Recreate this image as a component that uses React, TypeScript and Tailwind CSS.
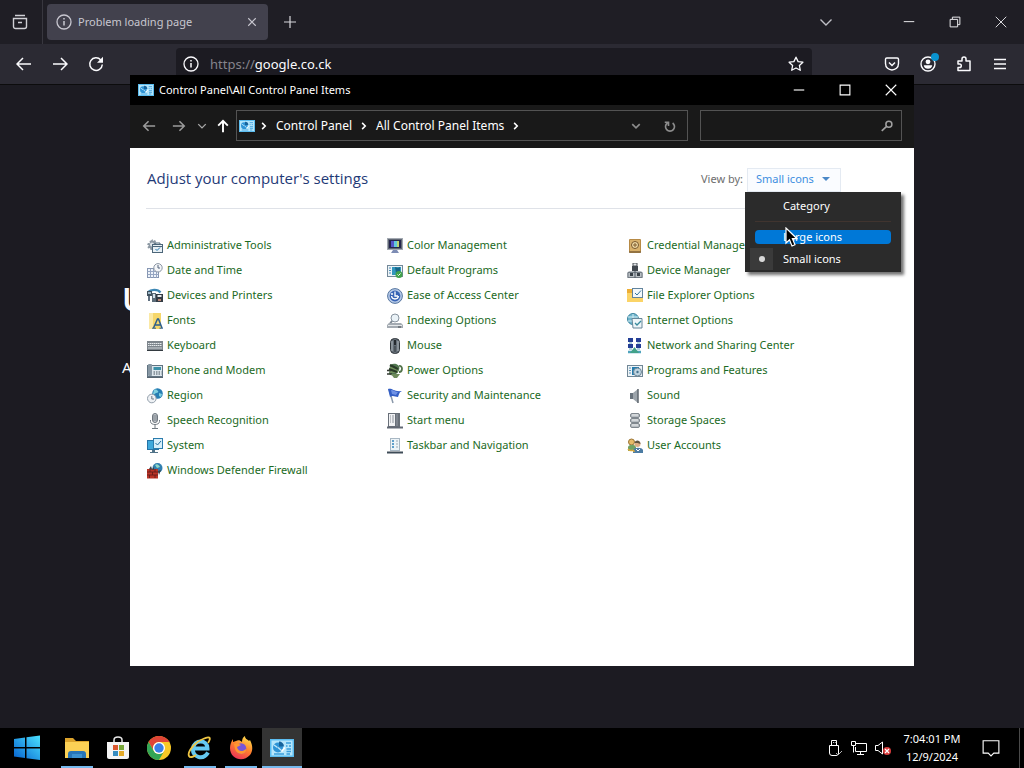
import { useState, type ReactNode } from 'react';

function Icon({ size = 16, children }: { size?: number; children: ReactNode }) {
  return (
    <svg width={size} height={size} viewBox="0 0 16 16" fill="none" className="shrink-0" aria-hidden="true">
      {children}
    </svg>
  );
}

function PanelIcon({ size = 16 }: { size?: number }) {
  return (
    <svg width={size} height={(size * 3) / 4} viewBox="0 0 24 18" fill="none" className="shrink-0" aria-hidden="true">
      <rect width="24" height="18" fill="#5cbdf0" />
      <rect x="1.5" y="1.5" width="21" height="15" fill="#b6e6fb" />
      <circle cx="8" cy="8.500" r="5" fill="#2f94d6" />
      <path d="M9 7.500v-5a5 5 0 0 1 5 5z" fill="#17639c" />
      <path d="M7.500 8.500 4 6M8 8.500l3.500 3" stroke="#c3e9fa" strokeWidth="1.300" />
      <path d="M16 4h5M16 7h1.500M19 7h2M16.500 10H21M4 15h10M16.500 15H20M16.500 12.500H21" stroke="#3a9edd" strokeWidth="1.300" />
      <path d="m11.500 12.500 3.500-4" stroke="#fff" strokeWidth="1.500" />
    </svg>
  );
}

const icons: Record<string, ReactNode> = {
  tools: (
    <>
      <path d="M5.500 1 6 3l2-1 1 1.500-1 1.500 2 1v1.500L8 8l1 2-2 1-1.500-1L5 12H3.500L3 10 1 10.500.5 9 2 7.500 0 6.500 1 5l2 .2L2.500 3 4 2.500z" fill="#8c98a3" />
      <circle cx="5" cy="6.500" r="2" fill="#dfe5ea" />
      <rect x="5.500" y="6.500" width="10" height="8" fill="#e8f0f5" stroke="#4c6679" />
      <path d="M5 8.500h11M8 6V5h5v1" stroke="#4c6679" />
      <path d="m8.500 11 1.500 1.500 3-3" stroke="#2376ad" />
    </>
  ),
  date: (
    <>
      <rect x=".5" y="5.500" width="11" height="9" fill="#eef3fa" stroke="#8696b2" />
      <path d="M.5 8.500h11M.5 11.500h11M3.500 6v9M6.500 6v9M9.500 6v9" stroke="#96a6c2" />
      <circle cx="11" cy="4.800" r="4.200" fill="#f3f5f8" stroke="#8b95a3" />
      <path d="M11 2v3h2" stroke="#53637a" />
    </>
  ),
  devices: (
    <>
      <path d="M1 4C4 1 11 1 13.500 4.500" stroke="#3d87b4" strokeWidth="2.200" />
      <rect x="0" y="3" width="5" height="5" fill="#40515e" />
      <rect x="1" y="4" width="3" height="2" fill="#9db7c6" />
      <rect x="1" y="8" width="2" height="5" fill="#607080" />
      <rect x="5" y="5" width="4" height="9" fill="#5b6b78" />
      <rect x="6" y="6" width="2" height="4" fill="#d5e2ea" />
      <rect x="9" y="6" width="7" height="8" fill="#333b44" />
      <rect x="10.500" y="7" width="4" height="2" fill="#e6e9ec" />
      <rect x="11" y="11" width="3" height="2" fill="#b98674" />
    </>
  ),
  fonts: (
    <>
      <rect x="2" y="0" width="12" height="16" fill="#f6d76b" />
      <path d="M2 0h4v16H2z" fill="#fbe9a5" />
      <path d="m6.500 15 4-9h1l3.500 9M8.500 12h5" stroke="#2d5f8e" strokeWidth="1.500" />
      <path d="M5 15.200h4M12.500 15.200H16" stroke="#2d5f8e" />
    </>
  ),
  keyboard: (
    <>
      <rect x="0" y="3" width="16" height="10" fill="#7d858c" />
      <path d="M1 5.500h14M1 7.500h14" stroke="#e6eaed" strokeDasharray="1.500 .5" />
      <path d="M1 10h14" stroke="#cdd2d6" />
      <path d="M0 12.500h16" stroke="#333a40" />
    </>
  ),
  phone: (
    <>
      <rect x=".5" y="2.500" width="15" height="11" fill="#dce6ec" stroke="#607381" />
      <rect x="1" y="1" width="4" height="12" rx="1" fill="#8797a3" />
      <rect x="6.500" y="4" width="7.500" height="3" fill="#3a90a8" />
      <path d="M6.500 9h8M6.500 11h8" stroke="#44525d" strokeDasharray="1.500 1" />
      <path d="M0 14.500h16" stroke="#576570" />
    </>
  ),
  region: (
    <>
      <circle cx="10.500" cy="5.500" r="5.300" fill="#277eb3" />
      <path d="M7 2c2-1 3 0 4 1s-1 2-2 2-1 2-3 1zM12 5l3 1-1 3-2-1z" fill="#7fd0df" />
      <circle cx="4.800" cy="10.500" r="4.300" fill="#eef1f4" stroke="#929eaa" />
      <path d="M4.800 8v3H7" stroke="#6f7b88" />
    </>
  ),
  mic: (
    <>
      <rect x="5.500" y=".5" width="5" height="9" rx="2.500" fill="#c4c9ce" stroke="#6f777f" />
      <path d="M6 3h4M6 5h4M6 7h4" stroke="#747c84" />
      <path d="M3.500 7v1.500c0 4 9 4 9 0V7M8 12v3M5 15.500h6" stroke="#727a82" />
    </>
  ),
  system: (
    <>
      <rect x="0" y="2" width="12" height="10" fill="#2673a5" />
      <rect x="1" y="3" width="10" height="8" fill="#3fa9dc" />
      <rect x="6.500" y=".5" width="9" height="10" fill="#d7eefa" stroke="#2b7cad" />
      <path d="m8.500 5 2 2 3.500-4" stroke="#1e6d9f" />
      <path d="M5 12h3v2h3v1H3v-1h2z" fill="#527489" />
    </>
  ),
  firewall: (
    <>
      <circle cx="10.500" cy="5" r="5" fill="#317fb0" />
      <path d="M8 2c2-2 4 0 5 2l-3 1z" fill="#8fd8c7" />
      <rect x="0" y="6" width="11" height="9.500" fill="#ba3427" />
      <path d="M0 9h11M0 12h11M3 6v3M8 6v3M5.500 9v3M2.500 12v3M8 12v3" stroke="#5e1b19" strokeWidth=".8" />
      <path d="m2 6 2-3 1 3 2-2v3zM11 8l3-1-2 5z" fill="#3c4146" />
    </>
  ),
  color: (
    <>
      <rect x=".5" y=".5" width="15" height="11" fill="#606773" stroke="#a3a9b2" />
      <rect x="2" y="2" width="12" height="8" fill="#24264d" />
      <path d="M4 3h3v6H4z" fill="#5554c9" />
      <path d="M7 3h3v6H7z" fill="#62c8dd" />
      <path d="M10 3h2v6h-2z" fill="#bbd574" />
      <path d="M6 12h4l2 3H4z" fill="#7d8cb4" />
    </>
  ),
  defaults: (
    <>
      <rect x=".5" y="2.500" width="15" height="11" fill="#edf3f7" stroke="#738999" />
      <path d="M2 5h2M2 7.500h2M2 10h2" stroke="#4c8eb7" />
      <rect x="5" y="4" width="9" height="8" fill="#3296bd" />
      <path d="m8 4 3 1 2-1v4l-4 2z" fill="#176688" />
      <circle cx="12" cy="11.500" r="3.500" fill="#41a24b" />
      <path d="m10.500 11.500 1 1 2-2" stroke="#fff" />
    </>
  ),
  ease: (
    <>
      <circle cx="8" cy="8" r="7.400" fill="#b7cae8" stroke="#55759f" />
      <circle cx="8" cy="8" r="5.400" fill="#3864b5" />
      <path d="M4.500 8C5 12 11 12 11.500 8M8 3.500V8h3" stroke="#fff" strokeWidth="1.300" />
      <circle cx="5" cy="6" r="1" fill="#fff" />
    </>
  ),
  indexing: (
    <>
      <circle cx="8" cy="5" r="4" fill="#eaf2f7" stroke="#8994a0" />
      <path d="m5 8-3 4" stroke="#7e8994" strokeWidth="2" />
      <path d="M2 10h12l2 2v3H0v-3z" fill="#a4abb2" />
      <path d="M1 12.500h14" stroke="#e6e9eb" />
      <path d="M11 14h3" stroke="#454b51" />
    </>
  ),
  mouse: (
    <>
      <rect x="3.500" y=".5" width="9" height="15" rx="4" fill="#636c75" stroke="#31373c" />
      <path d="M5 3v10M11 3v10" stroke="#b2bac1" />
      <rect x="7" y="2" width="2" height="5" fill="#262b30" />
      <path d="M8 8v6" stroke="#343a40" />
    </>
  ),
  power: (
    <>
      <path d="M3 2c5-3 11 0 9 5-1 4-7 7-10 4" fill="#517750" />
      <path d="M3 4h8v6H3z" fill="#708f5c" />
      <path d="m3 2 8 4M2 6l8 3" stroke="#293b28" strokeWidth="2" />
      <path d="M12 3c4-1 4 6 0 6" stroke="#53744b" strokeWidth="1.800" />
      <path d="M0 7.500h4M0 11h5" stroke="#353b33" strokeWidth="1.500" />
      <path d="M4 11h9l-3 4H7z" fill="#6f8c5c" />
    </>
  ),
  flag: (
    <>
      <path d="m2 1 4 14" stroke="#8a98aa" strokeWidth="1.500" />
      <path d="M1 1c5-1 5 3 14 2-3 1-3 4-4 6-3 0-5-2-8 0z" fill="#345fc5" />
      <path d="M4 2c3 0 4 2 7 2l-2 3-4-1z" fill="#6e91e5" />
    </>
  ),
  start: (
    <>
      <rect x="1" y="0" width="12" height="14" fill="#686f78" />
      <rect x="2" y="1" width="6" height="12" fill="#f1f2f4" />
      <path d="M3 3h1M3 5h1M3 7h1M3 9h1M5 3h2M5 5h2M5 7h2M5 9h2" stroke="#8c929b" />
      <path d="M10 1v12" stroke="#9299a2" />
      <path d="M0 14.500h16" stroke="#626974" strokeWidth="2" />
    </>
  ),
  taskbar: (
    <>
      <rect x="3.500" y=".5" width="9" height="12" fill="#edf4f8" stroke="#a8b7c3" />
      <path d="M5 3h2M5 6h2M5 9h2" stroke="#3283ba" strokeWidth="1.500" />
      <path d="M9 3h2M9 6h2M9 9h2" stroke="#9ba9b5" />
      <path d="M0 14.500h16" stroke="#3e4b57" strokeWidth="2" />
    </>
  ),
  credential: (
    <>
      <rect x="2" y="1" width="12" height="14" rx="1" fill="#b78a45" />
      <rect x="3" y="2" width="10" height="11" fill="#d9b16b" />
      <circle cx="8" cy="7" r="3.500" fill="#f2dda9" stroke="#78572c" />
      <path d="M8 5v4M6 7h4" stroke="#805d2c" />
      <path d="M2 14h12" stroke="#705d40" />
    </>
  ),
  device: (
    <>
      <rect x="6" y="0" width="4" height="3" fill="#e1e4e7" stroke="#4c5359" />
      <rect x="5" y="3" width="6" height="6" fill="#40474e" />
      <path d="M2 8h12l2 2v5H0v-5z" fill="#b8bec3" />
      <path d="M1 9.500h14v5H1z" stroke="#747d85" />
      <rect x="3" y="10" width="3" height="3" fill="#394148" />
      <rect x="10" y="10" width="3" height="3" fill="#394148" />
      <path d="M8 8v7" stroke="#535d66" />
    </>
  ),
  folder: (
    <>
      <path d="M0 1h6l2 2h8v11H0z" fill="#edae35" />
      <path d="M0 5h16v9H0z" fill="#fbd467" />
      <rect x="5.500" y=".5" width="10" height="9" fill="#f3f8fb" stroke="#62849d" />
      <path d="m8 5 2 2 4-4.500" stroke="#31769d" />
    </>
  ),
  internet: (
    <>
      <circle cx="6" cy="6" r="5.500" fill="#71b5cd" stroke="#3b849f" />
      <path d="M1 4h10M1 8h9M6 1v10" stroke="#d4eef4" />
      <path d="M5 5.500h10v9.500H6z" fill="#eef6f9" stroke="#688799" />
      <path d="m8 10 2 2 4-4" stroke="#398b9d" strokeWidth="1.300" />
    </>
  ),
  network: (
    <>
      <rect x="1" y="0" width="5" height="4" fill="#243f96" />
      <rect x="9" y="0" width="5" height="4" fill="#243f96" />
      <rect x="1" y="6" width="5" height="4" fill="#243f96" />
      <rect x="9" y="6" width="5" height="4" fill="#243f96" />
      <path d="M2 5h3M10 5h3M2 11h3M10 11h3" stroke="#64a7bc" />
      <path d="M1 14h13" stroke="#4fa3bd" strokeWidth="2.500" />
      <path d="m3 15 4.500-6 4.500 6z" fill="#42a289" />
    </>
  ),
  programs: (
    <>
      <rect x=".5" y="2.500" width="15" height="11" fill="#edf3f7" stroke="#718796" />
      <path d="M2 5h2M2 7.500h2M2 10h2" stroke="#5d92b4" />
      <rect x="5" y="4" width="7" height="8" fill="#247cae" />
      <circle cx="10.500" cy="9" r="4" fill="#bfd4e0" stroke="#6f8797" />
      <circle cx="10.500" cy="9" r="1.200" fill="#47728e" />
    </>
  ),
  sound: (
    <>
      <path d="M3 5h3v6H3z" fill="#68727c" />
      <path d="m6 5 5-4v14l-5-4z" fill="#9ca4ab" />
      <path d="M11 1v14" stroke="#5e666e" strokeWidth="1.500" />
    </>
  ),
  storage: (
    <>
      {[0, 5, 10].map((y) => (
        <g key={y}>
          <rect x="3.500" y={y + 0.5} width="9" height="4" rx="1.500" fill="#b7bdc2" stroke="#7f878e" />
          <path d={`M5 ${y + 2}h6`} stroke="#eef0f1" />
        </g>
      ))}
    </>
  ),
  users: (
    <>
      <circle cx="4.500" cy="4" r="3" fill="#e7bb68" stroke="#9a7435" />
      <path d="M1 13V9c1-3 7-3 8 0v4z" fill="#72a264" />
      <circle cx="10.500" cy="6" r="3" fill="#dcae85" />
      <path d="M7.500 5c1-4 6-3 6 1l-3-1z" fill="#5f5340" />
      <path d="M6 15v-3c1-3 9-3 10 0v3z" fill="#4c7ca3" />
      <path d="m9 11 2 2 2-2" stroke="#fff" />
      <path d="M1 11c3 4 6-1 6 3" stroke="#d9aa3b" strokeWidth="1.500" />
    </>
  ),
};

const columns = [
  [
    { icon: 'tools', label: 'Administrative Tools' },
    { icon: 'date', label: 'Date and Time' },
    { icon: 'devices', label: 'Devices and Printers' },
    { icon: 'fonts', label: 'Fonts' },
    { icon: 'keyboard', label: 'Keyboard' },
    { icon: 'phone', label: 'Phone and Modem' },
    { icon: 'region', label: 'Region' },
    { icon: 'mic', label: 'Speech Recognition' },
    { icon: 'system', label: 'System' },
    { icon: 'firewall', label: 'Windows Defender Firewall' },
  ],
  [
    { icon: 'color', label: 'Color Management' },
    { icon: 'defaults', label: 'Default Programs' },
    { icon: 'ease', label: 'Ease of Access Center' },
    { icon: 'indexing', label: 'Indexing Options' },
    { icon: 'mouse', label: 'Mouse' },
    { icon: 'power', label: 'Power Options' },
    { icon: 'flag', label: 'Security and Maintenance' },
    { icon: 'start', label: 'Start menu' },
    { icon: 'taskbar', label: 'Taskbar and Navigation' },
  ],
  [
    { icon: 'credential', label: 'Credential Manager' },
    { icon: 'device', label: 'Device Manager' },
    { icon: 'folder', label: 'File Explorer Options' },
    { icon: 'internet', label: 'Internet Options' },
    { icon: 'network', label: 'Network and Sharing Center' },
    { icon: 'programs', label: 'Programs and Features' },
    { icon: 'sound', label: 'Sound' },
    { icon: 'storage', label: 'Storage Spaces' },
    { icon: 'users', label: 'User Accounts' },
  ],
];

function InfoIcon() {
  return (
    <Icon>
      <circle cx="8" cy="8" r="7" stroke="currentColor" strokeWidth="1.300" />
      <path d="M8 7v4.500M8 4v1.600" stroke="currentColor" strokeWidth="1.500" />
    </Icon>
  );
}

function Browser() {
  return (
    <div className="flex min-h-0 flex-1 flex-col bg-[#1c1b22] text-[#fbfbfe]">
      {/* Tab strip */}
      <div className="flex h-11 shrink-0 items-center bg-[#1f1e25]">
        <button aria-label="Firefox View" className="flex h-11 w-[43px] items-center justify-center border-r border-[#38373f] pr-[2px] text-[#d0d0d6]">
          <Icon>
            <path d="M3 1.500h10M1.500 4.500h13v8a2 2 0 0 1-2 2h-9a2 2 0 0 1-2-2zM6 8.500h4" stroke="currentColor" strokeWidth="1.400" />
          </Icon>
        </button>
        <div className="ml-1 flex h-9 w-[221px] items-center gap-[6px] rounded bg-[#42414d] pr-2 pl-[9px] text-[#c8c7d0]">
          <InfoIcon />
          <span className="flex-1 text-[11px]">Problem loading page</span>
          <button aria-label="Close tab" className="flex w-4 justify-center">
            <Icon size={12}>
              <path d="m3 3 10 10M13 3 3 13" stroke="currentColor" strokeWidth="1.500" />
            </Icon>
          </button>
        </div>
        <button aria-label="New tab" className="flex h-9 w-11 items-center justify-center">
          <Icon>
            <path d="M8 2v12M2 8h12" stroke="#d8d8dd" strokeWidth="1.200" />
          </Icon>
        </button>
        <button aria-label="List all tabs" className="mr-[42px] ml-auto flex h-9 w-9 items-center justify-center">
          <Icon>
            <path d="m2.500 5.500 5.500 5.500 5.500-5.500" stroke="#c0c0c6" strokeWidth="1.400" />
          </Icon>
        </button>
        <button aria-label="Minimize browser" className="flex h-11 w-[46px] items-center justify-center">
          <Icon size={12}>
            <path d="M1 7.500h14" stroke="#ececf0" strokeWidth="1.300" />
          </Icon>
        </button>
        <button aria-label="Restore browser" className="flex h-11 w-[46px] items-center justify-center">
          <Icon size={12}>
            <path d="M1.500 4.500h10v10h-10zM4.500 4V1.500h10v10H12" stroke="#ececf0" strokeWidth="1.300" />
          </Icon>
        </button>
        <button aria-label="Close browser" className="flex h-11 w-[46px] items-center justify-center">
          <Icon size={12}>
            <path d="m1 1 14 14M15 1 1 15" stroke="#ececf0" strokeWidth="1.200" />
          </Icon>
        </button>
      </div>

      {/* Navigation bar */}
      <div className="flex h-[41px] shrink-0 items-center border-b border-[#0c0c0d] bg-[#2b2a33] px-[6px]">
        <button aria-label="Back" className="flex h-9 w-9 items-center justify-center">
          <Icon>
            <path d="M15 8H1.500M7 2 1 8l6 6" stroke="currentColor" strokeWidth="1.500" />
          </Icon>
        </button>
        <button aria-label="Forward" className="flex h-9 w-9 items-center justify-center">
          <Icon>
            <path d="M1 8h13.500M9 2l6 6-6 6" stroke="currentColor" strokeWidth="1.500" />
          </Icon>
        </button>
        <button aria-label="Reload" className="flex h-9 w-9 items-center justify-center">
          <Icon>
            <path d="M12.800 4A6.300 6.300 0 1 0 14.300 8.500" stroke="currentColor" strokeWidth="1.500" />
            <path d="M15 .8v6H9z" fill="currentColor" />
          </Icon>
        </button>
        <div className="mx-[62px] flex h-8 flex-1 items-center rounded bg-[#1c1b22] pr-2 pl-[7px]">
          <InfoIcon />
          <a href="#" className="ml-[11px] flex-1 pt-[2px] text-[13px] text-[#fbfbfe]">
            <span className="text-[#85848c]">https://</span>google.co.ck
          </a>
          <button aria-label="Bookmark this page">
            <Icon>
              <path d="m8 1.200 2.100 4.400 4.800.6-3.500 3.300.9 4.800L8 12l-4.300 2.300.9-4.800L1.100 6.200l4.800-.6z" stroke="currentColor" strokeWidth="1.300" strokeLinejoin="round" />
            </Icon>
          </button>
        </div>
        <button aria-label="Save to Pocket" className="flex h-9 w-9 items-center justify-center">
          <Icon>
            <path d="M2.800 2h10.400c.8 0 1.300.5 1.300 1.300v4.200c0 8.600-13 8.600-13 0V3.300C1.500 2.500 2 2 2.800 2z" stroke="currentColor" strokeWidth="1.400" />
            <path d="m5 6.500 3 3 3-3" stroke="currentColor" strokeWidth="1.500" />
          </Icon>
        </button>
        <button aria-label="Account" className="relative flex h-9 w-9 items-center justify-center">
          <Icon>
            <circle cx="8" cy="8" r="7" stroke="currentColor" strokeWidth="1.400" />
            <circle cx="8" cy="5.800" r="2.400" fill="currentColor" />
            <path d="M3.800 9.200h8.400c0 4.800-8.400 4.800-8.400 0z" fill="currentColor" />
          </Icon>
          <span className="absolute top-[7px] right-[7px] h-2 w-2 rounded-full bg-[#0a93cf]" />
        </button>
        <button aria-label="Extensions" className="flex h-9 w-9 items-center justify-center">
          <Icon>
            <path d="M2 5h4V3a2 2 0 0 1 4 0v2h4v9.500H2v-3h1.500a1.800 1.800 0 0 0 0-3.600H2z" stroke="currentColor" strokeWidth="1.500" strokeLinejoin="round" />
          </Icon>
        </button>
        <button aria-label="Open menu" className="flex h-9 w-9 items-center justify-center">
          <Icon>
            <path d="M2 3.500h12M2 8h12M2 12.500h12" stroke="currentColor" strokeWidth="1.400" />
          </Icon>
        </button>
      </div>

      <main className="px-[122px] pt-[194px]">
        <h1 className="text-[32px] leading-10 font-semibold">U</h1>
        <p className="mt-9 text-[15px] leading-6">A</p>
      </main>
    </div>
  );
}

function ChevronRight() {
  return (
    <Icon size={10}>
      <path d="m5 3 5 5-5 5" stroke="#fff" strokeWidth="2.500" />
    </Icon>
  );
}

const viewOptions = ['Category', 'Large icons', 'Small icons'];

function ControlPanel() {
  const [view, setView] = useState('Small icons');
  const [highlighted, setHighlighted] = useState('Large icons');
  const [search, setSearch] = useState('');

  return (
    <section className="absolute top-[75px] left-[130px] flex h-[591px] w-[784px] flex-col bg-white text-[11px]">
      {/* Title bar */}
      <header className="flex h-[30px] shrink-0 items-center bg-black pl-2 text-white">
        <PanelIcon />
        <h2 className="ml-[5px] flex-1">Control Panel\All Control Panel Items</h2>
        <button aria-label="Minimize" className="flex h-full w-[46px] items-center justify-center">
          <Icon size={12}>
            <path d="M1 8h14" stroke="#fff" strokeWidth="1.500" />
          </Icon>
        </button>
        <button aria-label="Maximize" className="flex h-full w-[46px] items-center justify-center">
          <Icon size={12}>
            <path d="M1.500 1.500h13v13h-13z" stroke="#fff" strokeWidth="1.500" />
          </Icon>
        </button>
        <button aria-label="Close" className="flex h-full w-[46px] items-center justify-center">
          <Icon size={12}>
            <path d="m1 1 14 14M15 1 1 15" stroke="#fff" strokeWidth="1.500" />
          </Icon>
        </button>
      </header>

      {/* Address bar */}
      <nav className="flex h-[43px] shrink-0 items-center bg-[#191919] pr-3 pb-[2px] pl-1 text-white">
        <button aria-label="Back" className="flex w-[30px] justify-center">
          <Icon size={14}>
            <path d="M15 8H2M7.500 2.500 2 8l5.500 5.500" stroke="#9a9a9a" strokeWidth="1.800" />
          </Icon>
        </button>
        <button aria-label="Forward" className="flex w-[30px] justify-center">
          <Icon size={14}>
            <path d="M1 8h13M8.500 2.500 14 8l-5.500 5.500" stroke="#9a9a9a" strokeWidth="1.800" />
          </Icon>
        </button>
        <button aria-label="Recent locations" className="flex w-4 justify-center">
          <Icon size={10}>
            <path d="m2 5 6 6 6-6" stroke="#a8a8a8" strokeWidth="2.200" />
          </Icon>
        </button>
        <button aria-label="Up" className="flex w-[26px] justify-center">
          <Icon size={14}>
            <path d="M8 15V2M2.500 7.500 8 2l5.500 5.500" stroke="#fff" strokeWidth="2.200" />
          </Icon>
        </button>
        <div className="flex h-[31px] flex-1 items-center border border-[#535353] pl-[2px] text-xs">
          <PanelIcon />
          <span className="ml-1">
            <ChevronRight />
          </span>
          <button className="px-[7px]">Control Panel</button>
          <ChevronRight />
          <button className="px-[7px]">All Control Panel Items</button>
          <ChevronRight />
          <button aria-label="Previous locations" className="ml-auto flex w-[34px] justify-center">
            <Icon size={12}>
              <path d="m3 5.500 5 5 5-5" stroke="#8c8c8c" strokeWidth="2.200" />
            </Icon>
          </button>
          <button aria-label="Refresh" className="flex w-[34px] justify-center">
            <Icon size={12}>
              <path d="M11.500 4A6 6 0 1 1 4.500 4M6 8V3H1" stroke="#8c8c8c" strokeWidth="2.200" />
            </Icon>
          </button>
        </div>
        <div className="ml-3 flex h-[31px] w-[202px] items-center border border-[#535353] pr-2">
          <input
            type="text"
            aria-label="Search Control Panel"
            value={search}
            onChange={(e) => setSearch(e.target.value)}
            className="h-full min-w-0 flex-1 bg-transparent px-2 outline-none"
          />
          <Icon size={12}>
            <circle cx="10.500" cy="5.500" r="4" stroke="#a2a2a2" strokeWidth="2" />
            <path d="m7.500 8.500-6.500 6" stroke="#a2a2a2" strokeWidth="2.200" />
          </Icon>
        </div>
      </nav>

      {/* Heading and view selector */}
      <div className="mx-4 flex h-[61px] shrink-0 items-center border-b border-[#dfe2e8] pl-px">
        <h1 className="flex-1 font-['Open_Sans',sans-serif] text-[15px] text-[#1f3a77]">Adjust your computer's settings</h1>
        <div className="relative mr-[57px] flex items-center gap-1 pt-[3px]">
          <label htmlFor="view-by" className="text-[#6d6d6d]">
            View by:
          </label>
          <select
            id="view-by"
            value={view}
            onChange={(e) => setView(e.target.value)}
            className="h-6 w-[94px] appearance-none border border-[#e4eaf2] bg-[#fafcff] pl-2 text-[#3d8ee0] outline-none"
          >
            {viewOptions.map((option) => (
              <option key={option}>{option}</option>
            ))}
          </select>
          <span className="pointer-events-none absolute top-3 right-[11px] border-x-4 border-t-4 border-x-transparent border-t-[#4a88c7]" />
        </div>
      </div>

      <div className="grid grid-cols-[240px_240px_240px] pt-6 pl-[17px]">
        {columns.map((items) => (
          <ul key={items[0].label}>
            {items.map((item) => (
              <li key={item.label} className="flex h-[25px] items-center gap-1">
                <Icon>{icons[item.icon]}</Icon>
                <a href="#" className="text-[#1b6a24]">
                  {item.label}
                </a>
              </li>
            ))}
          </ul>
        ))}
      </div>

      {/* Open view menu */}
      <div role="menu" className="absolute top-[117px] left-[615px] w-[156px] bg-[#2b2b2b] pt-[3px] pb-[2px] text-white shadow-[3px_3px_3px_rgba(0,0,0,0.55)]">
        {viewOptions.map((option, i) => (
          <div key={option}>
            <button
              role="menuitemradio"
              aria-checked={view === option}
              onClick={() => setView(option)}
              onMouseEnter={() => setHighlighted(option)}
              className="flex h-[22px] w-full items-center pl-[5px]"
            >
              <span className={`flex h-[22px] w-[23px] shrink-0 items-center justify-center ${view === option ? 'bg-[#3a3a3a]' : ''}`}>
                {view === option && <span className="h-[6px] w-[6px] rounded-full bg-[#d8d8d8]" />}
              </span>
              <span
                className={`mr-[10px] flex h-[14px] flex-1 items-center rounded ${
                  highlighted === option ? '-ml-[18px] bg-[#0078d7] pl-7' : 'pl-[10px]'
                }`}
              >
                {option}
              </span>
            </button>
            {i === 0 && <hr className="mx-[10px] my-1 border-[#40342f]" />}
          </div>
        ))}
      </div>
    </section>
  );
}

function Taskbar() {
  return (
    <footer className="flex h-10 shrink-0 items-center bg-black text-white">
      <div className="flex h-full gap-px">
        <button aria-label="Start" className="flex w-14 items-center justify-center pr-[2px]">
          <svg width="28" height="26" viewBox="0 0 28 26" aria-hidden="true">
            <defs>
              <linearGradient id="win" x1="1" y1="0" x2="0" y2="1">
                <stop stopColor="#4be2ff" />
                <stop offset="1" stopColor="#0560cf" />
              </linearGradient>
            </defs>
            <path d="M1 4 12 2.500V12H1zM13.500 2.200 27 .5V12H13.500zM1 13.500h11V23L1 21.500zM13.500 13.500H27V25l-13.500-1.800z" fill="url(#win)" />
          </svg>
        </button>
        <button aria-label="File Explorer" className="relative flex w-10 items-center justify-center">
          <svg width="26" height="24" viewBox="0 0 26 24" aria-hidden="true">
            <path d="M1 2h8l3 3h13v17H1z" fill="#dca32c" />
            <path d="M1 6h24v16H1z" fill="#fbd055" />
            <path d="M4 22v-4c0-2 1-3 3-3h12c2 0 3 1 3 3v4h-4v-2H8v2z" fill="#2775b7" />
            <path d="M8 18h10v4H8z" fill="#3c91cf" />
          </svg>
          <span className="absolute inset-x-1 bottom-0 h-[2px] bg-[#76b9ed]" />
        </button>
        <button aria-label="Microsoft Store" className="flex w-10 items-center justify-center">
          <svg width="24" height="24" viewBox="0 0 24 24" aria-hidden="true">
            <path d="M8 7V4c0-4 8-4 8 0v3" fill="none" stroke="#e7e7e7" strokeWidth="1.500" />
            <path d="M1 6h22v15c0 1-1 2-2 2H3c-1 0-2-1-2-2z" fill="#f4f4f4" />
            <path d="M7 9h5v5H7z" fill="#db572f" />
            <path d="M13 9h5v5h-5z" fill="#78a83a" />
            <path d="M7 15h5v5H7z" fill="#378cc0" />
            <path d="M13 15h5v5h-5z" fill="#e4aa28" />
          </svg>
        </button>
        <button aria-label="Google Chrome" className="flex w-10 items-center justify-center">
          <svg width="24" height="24" viewBox="0 0 24 24" aria-hidden="true">
            <circle cx="12" cy="12" r="12" fill="#f9c926" />
            <path d="M1.600 6A12 12 0 0 1 22.400 6H12a6 6 0 0 0-5.200 9z" fill="#de4436" />
            <path d="M1.600 6A12 12 0 0 0 12 24l5.200-9a6 6 0 0 1-10.400 0z" fill="#33a556" />
            <circle cx="12" cy="12" r="6" fill="#fff" />
            <circle cx="12" cy="12" r="4.700" fill="#397fe7" />
          </svg>
        </button>
        <button aria-label="Internet Explorer" className="relative flex w-10 items-center justify-center">
          <svg width="26" height="24" viewBox="0 0 26 24" fill="none" aria-hidden="true">
            <path d="M21 16.500C16 25 5 21 6 12.500 7 3 20.500 3 20.500 12.500H7" stroke="#65c9f1" strokeWidth="4" />
            <path d="M21 7c4-6 1-7-5-4C8 6 0 16 2 20c1 2 4 1 7-1" stroke="#efc643" strokeWidth="1.800" />
          </svg>
          <span className="absolute inset-x-1 bottom-0 h-[2px] bg-[#76b9ed]" />
        </button>
        <button aria-label="Firefox" className="relative flex w-10 items-center justify-center">
          <svg width="24" height="24" viewBox="0 0 24 24" aria-hidden="true">
            <defs>
              <linearGradient id="fox" x1=".8" y1="0" x2=".3" y2="1">
                <stop stopColor="#ffe34c" />
                <stop offset=".5" stopColor="#ff812e" />
                <stop offset="1" stopColor="#ec3157" />
              </linearGradient>
            </defs>
            <path d="M4 3v3l3-1c2-1 4-1 6 1 0-3 1-5 3-6 0 3 2 3 4 5l1-1c3 6 3 11 0 15-7 8-20 4-20-7 0-3 1-6 3-9z" fill="url(#fox)" />
            <circle cx="12" cy="12.500" r="5.300" fill="#7855d8" />
            <path d="M5 8c3-2 5 0 7 1l-4 2c1 5 6 5 9 2 1 6-9 7-11 0z" fill="#ff9630" />
          </svg>
          <span className="absolute inset-x-1 bottom-0 h-[2px] bg-[#76b9ed]" />
        </button>
        <button aria-label="Control Panel" className="relative flex w-10 items-center justify-center bg-[#343434]">
          <PanelIcon size={24} />
          <span className="absolute inset-x-0 bottom-0 h-[2px] bg-[#76b9ed]" />
        </button>
      </div>

      <div className="ml-auto flex h-full items-center">
        <button aria-label="Safely remove hardware" className="flex w-6 justify-center">
          <Icon>
            <path d="M4.500 5V.5h5V5M2.500 5.500h9V13c0 1.500-1 2.500-2.500 2.500H5A2.500 2.500 0 0 1 2.500 13z" stroke="#fff" />
            <path d="M6 2.500h.8M7.800 2.500h.8" stroke="#fff" />
            <path d="m9 13 2 2 4-4" stroke="#b5b5b5" />
          </Icon>
        </button>
        <button aria-label="Network" className="flex w-6 justify-center">
          <Icon>
            <path d="M5 3.500h10.500v8H4.500V7M.5 1.500h4v4h-4zM2.500 6v6.500M9.500 12v2.500M6 14.500h7" stroke="#fff" />
          </Icon>
        </button>
        <button aria-label="Volume muted" className="mr-[6px] flex w-6 justify-center">
          <Icon>
            <path d="M.5 5.500H3L7.500 2v12L3 10.500H.5z" stroke="#fff" />
            <circle cx="12" cy="11" r="4" fill="#d83b3b" />
            <path d="m10 9 4 4M14 9l-4 4" stroke="#fff" strokeWidth="1.200" />
          </Icon>
        </button>
        <time className="w-[62px] text-center text-[11px] leading-[18px] whitespace-nowrap">
          7:04:01 PM
          <br />
          12/9/2024
        </time>
        <button aria-label="Notifications" className="flex w-14 items-center justify-center">
          <Icon size={18}>
            <path d="M1 1.500h14v11h-4.500L8 15l-2.500-2.500H1z" stroke="#fff" />
          </Icon>
        </button>
        <span className="mr-1 h-full w-px bg-[#4a4a4a]" />
      </div>
    </footer>
  );
}

export default function App() {
  return (
    <div className="relative flex h-screen flex-col overflow-hidden bg-[#1c1b22] font-['Noto_Sans','Open_Sans',sans-serif]">
      <Browser />
      <ControlPanel />
      <Taskbar />
      <svg className="pointer-events-none absolute top-[227px] left-[785px]" width="13" height="21" viewBox="0 0 13 21" aria-hidden="true">
        <path d="M1 1v15l3.500-3.300L7 19l3-1.300-2.600-6H12z" fill="#000" stroke="#fff" strokeWidth="1.200" />
      </svg>
    </div>
  );
}
